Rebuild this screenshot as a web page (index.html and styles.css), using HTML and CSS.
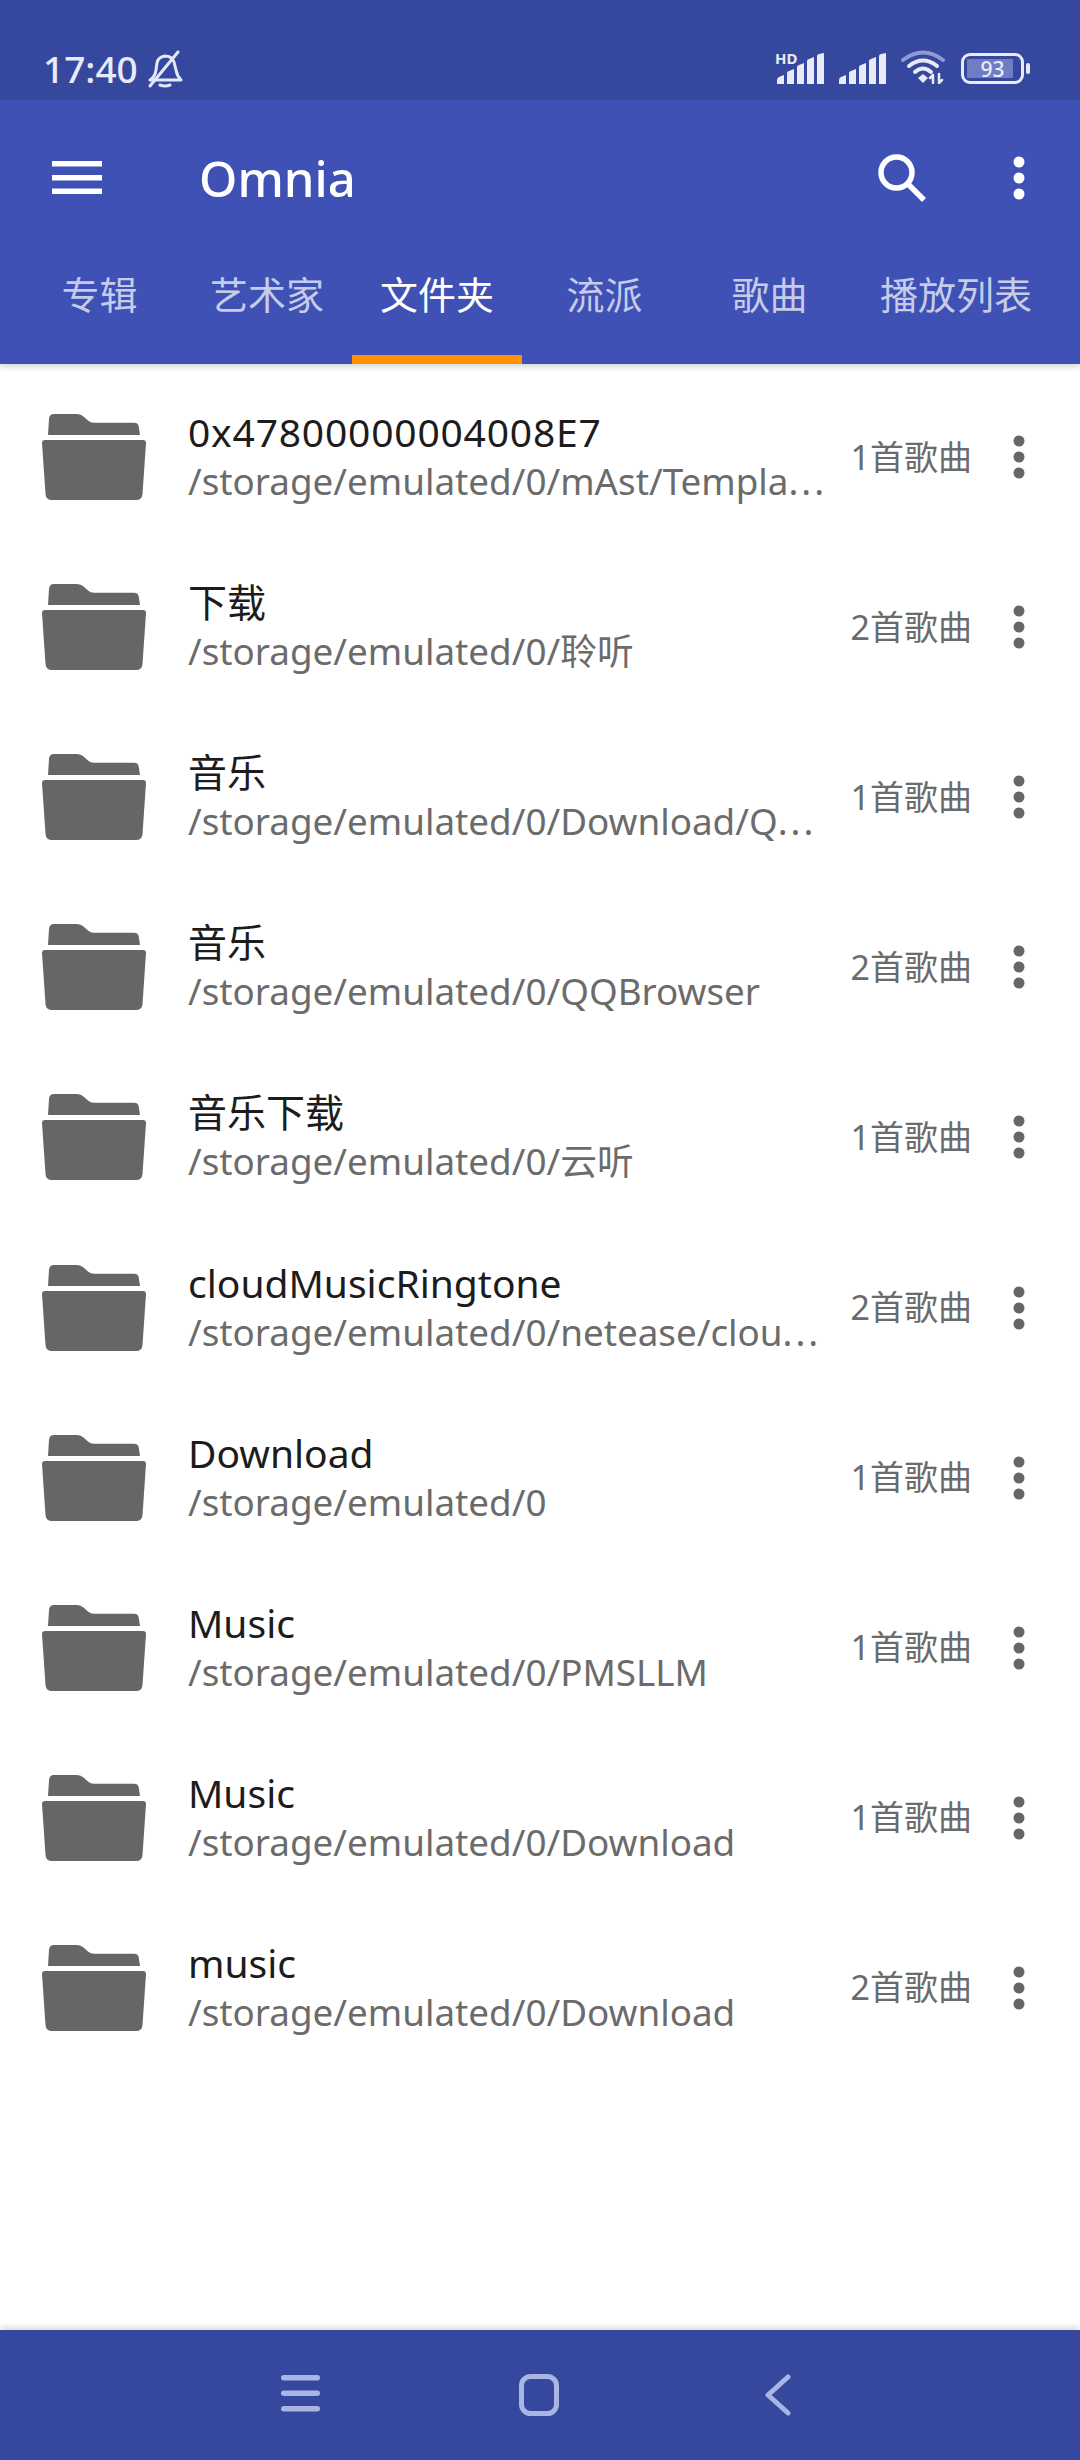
FILE: index.html
```html
<!DOCTYPE html>
<html lang="zh">
<head>
<meta charset="utf-8">
<title>Omnia</title>
<link rel="stylesheet" href="styles.css">
</head>
<body>
<svg class="defs" width="0" height="0" aria-hidden="true">
  <defs>
    <symbol id="folder" viewBox="0 0 104 86">
      <path d="M6 21 L7 5 Q7.4 0 12 0 H35 Q39 0 41.5 2.5 L46 6.5 Q48.5 8.7 52 8.7 H92 Q96.5 8.7 96.8 13 L98 21 Z"/>
      <path d="M3 26 H101 Q104 26 104 29 L100.5 80 Q100 86 94 86 H10 Q4 86 3.5 80 L0 29 Q0 26 3 26 Z"/>
    </symbol>
    <symbol id="dots" viewBox="0 0 12 44">
      <circle cx="6" cy="6" r="5.5"/><circle cx="6" cy="22" r="5.5"/><circle cx="6" cy="38" r="5.5"/>
    </symbol>
    <symbol id="signal" viewBox="0 0 48 32">
      <path d="M0 31 V27 Q0 25 2 24 L7 22 V31 Z M10 31 V20 Q10 18.500 12 18 L17 16 V31 Z M20 31 V14 Q20 12.500 22 12 L27 10 V31 Z M30 31 V8 Q30 6.500 32 6 L37 4 V31 Z M40 31 V3 Q40 1.500 42 1 L47 0 V31 Z"/>
    </symbol>
  </defs>
</svg>
<header class="appbar">
  <div class="status">
    <div class="status-left">
      <span class="time">17:40</span>
      <svg class="bell" viewBox="0 0 36 38" fill="none" stroke="#e4e8f6" stroke-width="3" stroke-linecap="round" stroke-linejoin="round">
        <path d="M3 30 Q8 27 9 20 L10 13 Q11 7 18 6 Q25 6 27 12 L29 20 Q30 26 34 30 Z"/>
        <path d="M13 35 Q18 37 23 35"/>
        <path d="M3 36 L31 2" stroke-width="3"/>
      </svg>
    </div>
    <div class="status-right">
      <div class="sig sig-hd">
        <span class="hd">HD</span>
        <svg class="sig-icon" fill="#e8ebf7"><use href="#signal"/></svg>
      </div>
      <svg class="sig-icon sig-two" fill="#e8ebf7"><use href="#signal"/></svg>
      <svg class="wifi" viewBox="0 0 46 34" fill="none" stroke-linecap="round">
        <path d="M2 10 Q22 -5 42 10" stroke="#8d9ad4" stroke-width="4"/>
        <path d="M8 16 Q22 5 36 16" stroke="#e8ebf7" stroke-width="4"/>
        <path d="M14 22 Q22 15 30 22" stroke="#e8ebf7" stroke-width="4"/>
        <path d="M17 28 L22 24 L27 28 L22 33 Z" fill="#e8ebf7"/>
        <path d="M32 25 V33 M32 25 L29 28 M38 33 V24 M38 33 L41 30" stroke="#e8ebf7" stroke-width="2.5"/>
      </svg>
      <div class="battery">
        <div class="battery-body"><span class="battery-fill"></span><span class="battery-num">93</span></div>
        <span class="battery-tip"></span>
      </div>
    </div>
  </div>
  <div class="toolbar">
    <svg class="menu" viewBox="0 0 50 33" fill="#fff"><rect width="50" height="5.5" y="0"/><rect width="50" height="5.5" y="14"/><rect width="50" height="5.5" y="27.5"/></svg>
    <h1 class="title">Omnia</h1>
    <svg class="search" viewBox="0 0 48 48" fill="none" stroke="#fff" stroke-width="5.5"><circle cx="18.5" cy="18.5" r="15.5"/><path d="M30 30 L46 46"/></svg>
    <svg class="more more-white" fill="#fff"><use href="#dots"/></svg>
  </div>
  <nav class="tabs">
    <a class="tab">专辑</a>
    <a class="tab">艺术家</a>
    <a class="tab tab-active">文件夹</a>
    <a class="tab">流派</a>
    <a class="tab">歌曲</a>
    <a class="tab">播放列表</a>
  </nav>
</header>
<main class="list">
  <div class="row"><svg class="folder"><use href="#folder"/></svg><div class="info"><div class="name name-num">0x47800000004008E7</div><div class="path">/storage/emulated/0/mAst/Templa<span class="ell">...</span></div></div><div class="count">1首歌曲</div><svg class="more"><use href="#dots"/></svg></div>
  <div class="row"><svg class="folder"><use href="#folder"/></svg><div class="info"><div class="name">下载</div><div class="path">/storage/emulated/0/聆听</div></div><div class="count">2首歌曲</div><svg class="more"><use href="#dots"/></svg></div>
  <div class="row"><svg class="folder"><use href="#folder"/></svg><div class="info"><div class="name">音乐</div><div class="path">/storage/emulated/0/Download/Q<span class="ell">...</span></div></div><div class="count">1首歌曲</div><svg class="more"><use href="#dots"/></svg></div>
  <div class="row"><svg class="folder"><use href="#folder"/></svg><div class="info"><div class="name">音乐</div><div class="path">/storage/emulated/0/QQBrowser</div></div><div class="count">2首歌曲</div><svg class="more"><use href="#dots"/></svg></div>
  <div class="row"><svg class="folder"><use href="#folder"/></svg><div class="info"><div class="name">音乐下载</div><div class="path">/storage/emulated/0/云听</div></div><div class="count">1首歌曲</div><svg class="more"><use href="#dots"/></svg></div>
  <div class="row"><svg class="folder"><use href="#folder"/></svg><div class="info"><div class="name">cloudMusicRingtone</div><div class="path">/storage/emulated/0/netease/clou<span class="ell">...</span></div></div><div class="count">2首歌曲</div><svg class="more"><use href="#dots"/></svg></div>
  <div class="row"><svg class="folder"><use href="#folder"/></svg><div class="info"><div class="name">Download</div><div class="path">/storage/emulated/0</div></div><div class="count">1首歌曲</div><svg class="more"><use href="#dots"/></svg></div>
  <div class="row"><svg class="folder"><use href="#folder"/></svg><div class="info"><div class="name">Music</div><div class="path">/storage/emulated/0/PMSLLM</div></div><div class="count">1首歌曲</div><svg class="more"><use href="#dots"/></svg></div>
  <div class="row"><svg class="folder"><use href="#folder"/></svg><div class="info"><div class="name">Music</div><div class="path">/storage/emulated/0/Download</div></div><div class="count">1首歌曲</div><svg class="more"><use href="#dots"/></svg></div>
  <div class="row"><svg class="folder"><use href="#folder"/></svg><div class="info"><div class="name">music</div><div class="path">/storage/emulated/0/Download</div></div><div class="count">2首歌曲</div><svg class="more"><use href="#dots"/></svg></div>
</main>
<footer class="navbar">
  <svg class="nav-icon" viewBox="0 0 40 40" fill="#a9b5e3"><rect x="0" y="0" width="39" height="5.5" rx="2.7"/><rect x="0" y="15.5" width="39" height="5.5" rx="2.7"/><rect x="0" y="31" width="39" height="5.5" rx="2.7"/></svg>
  <svg class="nav-icon nav-home" viewBox="0 0 40 42" fill="none" stroke="#a9b5e3" stroke-width="5"><rect x="2.5" y="2.5" width="35" height="37" rx="9"/></svg>
  <svg class="nav-icon nav-back" viewBox="0 0 26 42" fill="none" stroke="#a9b5e3" stroke-width="5" stroke-linecap="round" stroke-linejoin="round"><path d="M23 3 L3 21 L23 39"/></svg>
</footer>
</body>
</html>
```
FILE: styles.css
```css
* { box-sizing: border-box; }
html, body { margin: 0; padding: 0; }
body {
  width: 1080px;
  height: 2460px;
  overflow: hidden;
  display: flex;
  flex-direction: column;
  background: #fff;
  font-family: "Noto Sans", "Noto Sans CJK SC", sans-serif;
}
.defs { position: absolute; }

.appbar {
  background: #3f51b5;
  box-shadow: 0 3px 6px rgba(0, 0, 0, .16);
  position: relative;
  z-index: 2;
  flex: none;
}
.status {
  height: 100px;
  background: #36489e;
  display: flex;
  justify-content: space-between;
  padding: 50px 50px 0 43px;
}
.status-left { display: flex; align-items: flex-start; gap: 9px; }
.time { font-size: 37px; line-height: 38px; font-weight: 500; color: #e8ebf7; }
.bell { width: 36px; height: 38px; }
.status-right { display: flex; align-items: flex-start; }
.sig { position: relative; }
.sig-icon { width: 48px; height: 32px; display: block; margin-top: 3px; }
.hd {
  position: absolute;
  left: -2px;
  top: 0;
  font-size: 15px;
  line-height: 16px;
  font-weight: 700;
  color: #e8ebf7;
}
.sig-two { margin-left: 14px; }
.wifi { width: 46px; height: 34px; margin-left: 14px; }
.battery { display: flex; align-items: center; margin-left: 14px; margin-top: 3px; }
.battery-body {
  width: 63px;
  height: 31px;
  border: 3.5px solid #e8ebf7;
  border-radius: 9px;
  position: relative;
  display: flex;
  align-items: center;
  justify-content: center;
}
.battery-fill {
  position: absolute;
  left: 3px;
  top: 3px;
  bottom: 3px;
  width: 46px;
  background: #6f7dc4;
}
.battery-num {
  position: relative;
  font-size: 21px;
  line-height: 24px;
  font-weight: 500;
  color: #e8ebf7;
}
.battery-tip {
  width: 4px;
  height: 11px;
  border-radius: 2px;
  background: #e8ebf7;
  margin-left: 2px;
}

.toolbar {
  height: 155px;
  display: flex;
  align-items: center;
  padding-left: 52px;
}
.menu { width: 50px; height: 33px; }
.title {
  margin: 0 0 0 97px;
  flex: 1;
  font-size: 49px;
  line-height: 60px;
  font-weight: 500;
  color: #fff;
}
.search { width: 48px; height: 48px; margin-right: 87px; }
.more { width: 12px; height: 44px; fill: #666; flex: none; }
.more-white { height: 44px; fill: #fff; }

.tabs {
  height: 109px;
  display: flex;
  padding-left: 17px;
}
.tab {
  min-width: 165px;
  height: 109px;
  padding: 0 28px 26px;
  display: flex;
  align-items: center;
  justify-content: center;
  font-size: 38px;
  color: #c5cbe9;
  border-bottom: 9px solid transparent;
}
.tab-active { color: #fff; border-bottom-color: #ff9100; }

.list {
  flex: 1;
  padding-top: 8px;
  position: relative;
}
.row {
  height: 170.1px;
  display: flex;
  align-items: center;
  padding-left: 42px;
}
.folder { width: 104px; height: 86px; fill: #666; flex: none; }
.info { flex: 1; min-width: 0; margin-left: 42px; }
.name {
  font-size: 39px;
  line-height: 49px;
  color: #1c1c1c;
  white-space: nowrap;
  margin-top: -1px;
}
.name-num { letter-spacing: .8px; }
.path {
  font-size: 36.8px;
  line-height: 49px;
  color: #6b6b6b;
  white-space: nowrap;
  margin-top: 1px;
}
.ell { letter-spacing: 3px; }
.count {
  width: 142px;
  flex: none;
  text-align: right;
  font-size: 34px;
  color: #6b6b6b;
  margin: 0 41px 4px 0;
}
.row .more { margin-right: 55px; }
.toolbar .more { margin-right: 55px; }

.navbar {
  height: 130px;
  flex: none;
  background: #36489e;
  box-shadow: 0 -3px 6px rgba(0, 0, 0, .14);
  display: flex;
  align-items: center;
  padding: 0 0 1px 281px;
  position: relative;
}
.nav-icon { width: 40px; height: 40px; flex: none; }
.nav-home { height: 42px; margin-left: 198px; }
.nav-back { width: 26px; height: 42px; margin-left: 206px; }
```
